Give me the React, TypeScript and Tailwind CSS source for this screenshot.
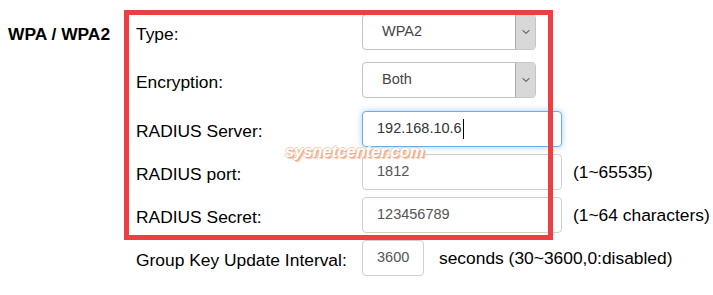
import { ChevronDown } from 'lucide-react';

const font = { fontFamily: '"Liberation Sans", Arial, sans-serif' };

function Select({ value }: { value: string }) {
  return (
    <div className="flex h-[36px] w-[174px] items-stretch overflow-hidden rounded-[4px] border border-[#c4c4c4] bg-white">
      <div className="flex flex-1 items-center pl-[19px] text-[14.5px] text-[#444]">{value}</div>
      <div className="flex w-[20px] items-center justify-center border-l border-[#aaaaaa] bg-[#d8d8d8]">
        <ChevronDown size={12} strokeWidth={2} className="text-[#222]" />
      </div>
    </div>
  );
}

function Input({ value, w = 'w-[200px]', focused = false }: { value: string; w?: string; focused?: boolean }) {
  return (
    <div
      className={`flex h-[36px] items-center rounded-[4px] border bg-white pl-[14px] text-[14.5px] ${w} ${
        focused ? 'border-[#66afe9] text-[#333] shadow-[0_0_6px_rgba(102,175,233,0.6)]' : 'border-[#cfcfcf] text-[#555]'
      }`}
    >
      {value}
      {focused && <span className="ml-[1px] inline-block h-[20px] w-px bg-black" />}
    </div>
  );
}

function Row({
  side,
  label,
  children,
  hint,
  mt,
}: {
  side?: string;
  label: string;
  children: React.ReactNode;
  hint?: string;
  mt: string;
}) {
  return (
    <div className={`flex h-[36px] items-center ${mt}`}>
      <div className="w-[128px] pt-[4px] text-[17.4px] font-bold text-black">{side}</div>
      <div className="w-[226px] pt-[5px] text-[17.4px] text-black">{label}</div>
      {children}
      {hint && <div className="ml-[11px] text-[17.4px] text-black">{hint}</div>}
    </div>
  );
}

export default function App() {
  return (
    <div className="relative h-[295px] w-[713px] overflow-hidden bg-white pl-[8px]" style={font}>
      <Row side="WPA / WPA2" label="Type:" mt="mt-[14px]">
        <Select value="WPA2" />
      </Row>
      <Row label="Encryption:" mt="mt-[12px]">
        <Select value="Both" />
      </Row>
      <Row label="RADIUS Server:" mt="mt-[13px]">
        <Input value="192.168.10.6" focused />
      </Row>
      <Row label="RADIUS port:" hint="(1~65535)" mt="mt-[7px]">
        <Input value="1812" />
      </Row>
      <Row label="RADIUS Secret:" hint="(1~64 characters)" mt="mt-[7px]">
        <Input value="123456789" />
      </Row>
      <div className="mt-[7px] flex h-[36px] items-center">
        <div className="w-[128px]" />
        <div className="w-[226px] pt-[5px] text-[17.4px] text-black">Group Key Update Interval:</div>
        <Input value="3600" w="w-[62px]" />
        <div className="ml-[15px] text-[17.4px] text-black">seconds (30~3600,0:disabled)</div>
      </div>

      {/* annotation box */}
      <div className="pointer-events-none absolute left-[124px] top-[10px] h-[230px] w-[429px] border-[5px] border-[#ec3f42]" />

      {/* watermark */}
      <div className="pointer-events-none absolute left-[285px] top-[139px] text-[16.5px] font-bold italic text-white [text-shadow:1px_1px_0_#eea88a,2px_2px_1px_#f3c2a8,-1px_0_0_#f6cdb5,0_-1px_0_#f6cdb5]">
        sysnetcenter.com
      </div>
    </div>
  );
}
